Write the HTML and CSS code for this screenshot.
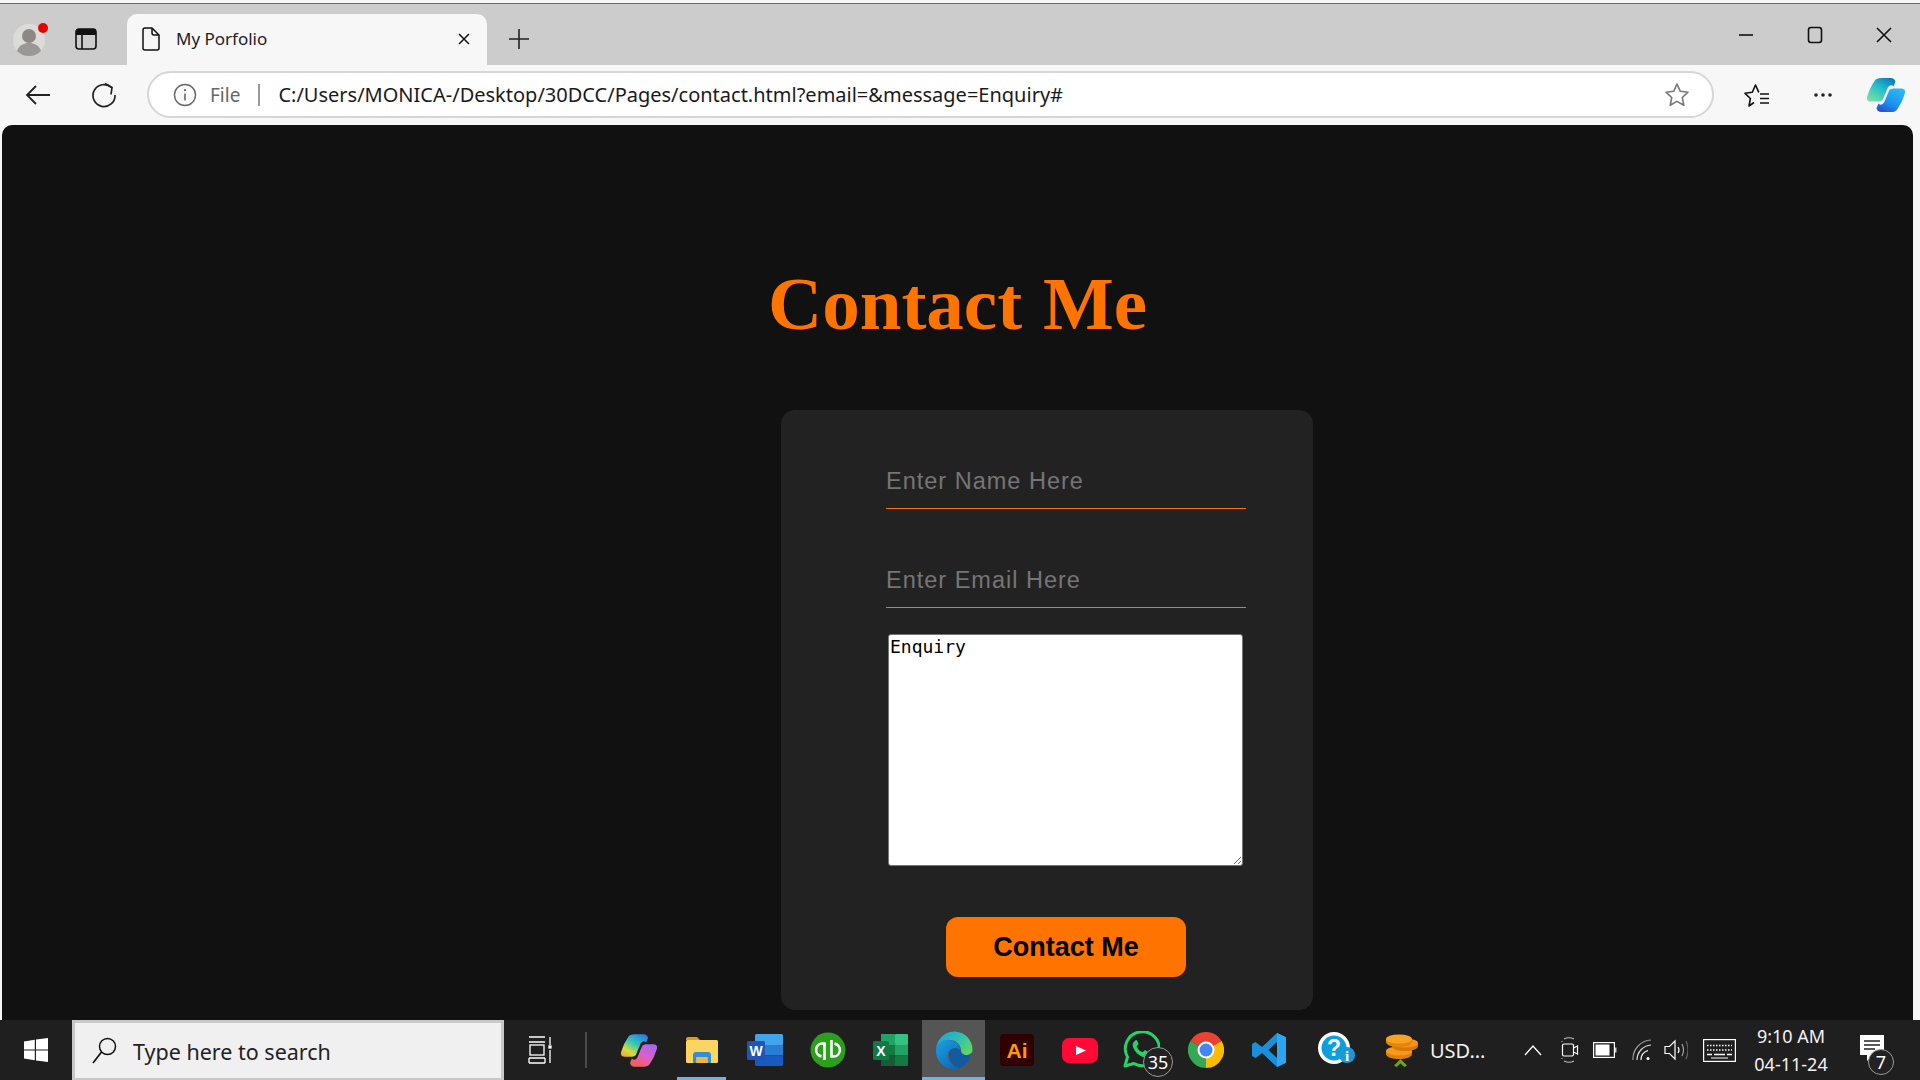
FILE: index.html
```html
<!DOCTYPE html>
<html lang="en">
<head>
  <meta charset="UTF-8">
  <title>My Porfolio</title>
  <link rel="stylesheet" href="styles.css">
</head>
<body>
  <div class="window">
    <!-- tab strip -->
    <div class="tab-strip">
      <div class="slot profile">
        <svg width="36" height="34" viewBox="0 0 36 34">
          <circle cx="16" cy="18" r="16" fill="#dcdbd8"/>
          <circle cx="16" cy="14" r="7" fill="#8c8985"/>
          <path d="M4 29c2-6 7-8 12-8s10 2 12 8c-3 3-7 5-12 5S7 32 4 29z" fill="#9a9794"/>
          <circle cx="30" cy="6" r="5" fill="#e60000"/>
        </svg>
      </div>
      <div class="slot sidebar-btn">
        <svg width="22" height="22" viewBox="0 0 22 22">
          <rect x="1" y="1" width="20" height="20" rx="3" fill="none" stroke="#111" stroke-width="1.6"/>
          <path d="M1 4a3 3 0 0 1 3-3h14a3 3 0 0 1 3 3v3H1z" fill="#111"/>
          <path d="M7 7v14" stroke="#111" stroke-width="1.6"/>
        </svg>
      </div>
      <div class="tab">
        <svg width="20" height="24" viewBox="0 0 20 24">
          <path d="M4 1h7l7 7v13a2 2 0 0 1-2 2H4a2 2 0 0 1-2-2V3a2 2 0 0 1 2-2z" fill="none" stroke="#111" stroke-width="1.5"/>
          <path d="M11 1v5a2 2 0 0 0 2 2h5" fill="none" stroke="#111" stroke-width="1.5"/>
        </svg>
        <span class="tab-title">My Porfolio</span>
        <svg class="tab-close" width="12" height="12" viewBox="0 0 12 12">
          <path d="M1 1l10 10M11 1L1 11" stroke="#111" stroke-width="1.5"/>
        </svg>
      </div>
      <div class="slot new-tab">
        <svg width="20" height="20" viewBox="0 0 20 20">
          <path d="M10 0v20M0 10h20" stroke="#222" stroke-width="1.6"/>
        </svg>
      </div>
      <div class="win-controls">
        <div class="slot win-btn">
          <svg width="16" height="16" viewBox="0 0 16 16"><path d="M1 8h14" stroke="#111" stroke-width="1.6"/></svg>
        </div>
        <div class="slot win-btn">
          <svg width="16" height="18" viewBox="0 0 16 18"><rect x="1.5" y="1.5" width="13" height="15" rx="2.5" fill="none" stroke="#111" stroke-width="1.6"/></svg>
        </div>
        <div class="slot win-btn">
          <svg width="16" height="16" viewBox="0 0 16 16"><path d="M1 1l14 14M15 1L1 15" stroke="#111" stroke-width="1.6"/></svg>
        </div>
      </div>
    </div>

    <!-- address bar -->
    <div class="toolbar">
      <div class="slot back-btn">
        <svg width="26" height="22" viewBox="0 0 26 22"><path d="M25 11H2M11 2l-9 9 9 9" fill="none" stroke="#222" stroke-width="1.8"/></svg>
      </div>
      <div class="slot reload-btn">
        <svg width="26" height="26" viewBox="0 0 26 26"><path d="M20.5 5.5A11 11 0 1 0 24 13" fill="none" stroke="#222" stroke-width="1.7"/><path d="M14 1.5l7 4-1 7" fill="none" stroke="#222" stroke-width="1.7"/></svg>
      </div>
      <div class="address">
        <svg class="info-icon" width="24" height="24" viewBox="0 0 24 24">
          <circle cx="12" cy="12" r="10.5" fill="none" stroke="#666" stroke-width="1.4"/>
          <path d="M12 10.5v7" stroke="#666" stroke-width="1.6"/><circle cx="12" cy="7.2" r="1.1" fill="#666"/>
        </svg>
        <span class="scheme">File</span>
        <span class="scheme-sep"></span>
        <span class="url">C:/Users/MONICA-/Desktop/30DCC/Pages/contact.html?email=&amp;message=Enquiry#</span>
        <svg class="star" width="26" height="26" viewBox="0 0 26 26">
          <path d="M13 2l3.3 7.3 7.7.9-5.7 5.3 1.5 7.8-6.8-3.9-6.8 3.9 1.5-7.8L2 10.2l7.7-.9z" fill="none" stroke="#777" stroke-width="1.6" stroke-linejoin="round"/>
        </svg>
      </div>
      <div class="slot">
        <svg width="28" height="28" viewBox="0 0 28 28">
          <path d="M11 21.5L6 25l1.4-7.5L2 12.3l7.3-1L12.5 4l3.3 7.3" fill="none" stroke="#111" stroke-width="1.6" stroke-linejoin="round"/>
          <path d="M17 13h9M17 17.5h9M17 22h9" stroke="#111" stroke-width="1.5"/>
        </svg>
      </div>
      <div class="slot more-btn">
        <svg width="20" height="6" viewBox="0 0 20 6"><circle cx="3" cy="3" r="1.8" fill="#222"/><circle cx="10" cy="3" r="1.8" fill="#222"/><circle cx="17" cy="3" r="1.8" fill="#222"/></svg>
      </div>
      <div class="slot">
        <svg width="38" height="34" viewBox="0 0 40 36">
          <defs>
            <linearGradient id="cpA" x1="0.8" y1="0" x2="0.1" y2="1"><stop offset="0" stop-color="#0e7db5"/><stop offset="0.45" stop-color="#27c0cb"/><stop offset="1" stop-color="#7fe39c"/></linearGradient>
            <linearGradient id="cpB" x1="0.2" y1="1" x2="0.8" y2="0"><stop offset="0" stop-color="#2cb9f8"/><stop offset="0.6" stop-color="#1c92ee"/><stop offset="1" stop-color="#2450d6"/></linearGradient>
          </defs>
          <path d="M8 3Q10 0 15 0H25Q29 0 30 4L28 9Q25 6 22 10L17 22Q16 25 12 25H4Q-1 25 0 20Q3 10 8 3Z" fill="url(#cpA)"/>
          <path d="M8 3Q10 0 15 0H25Q29 0 30 4L28 9Q25 6 22 10L17 22Q16 25 12 25H4Q-1 25 0 20Q3 10 8 3Z" fill="url(#cpB)" transform="rotate(180 20 18)"/>
        </svg>
      </div>
    </div>

    <!-- the page itself -->
    <div class="viewport-wrap">
      <main class="viewport">
        <h1 class="page-title">Contact Me</h1>
        <form class="contact-card" action="#">
          <input class="field" type="text" placeholder="Enter Name Here">
          <input class="field field-email" type="email" placeholder="Enter Email Here">
          <textarea class="message">Enquiry</textarea>
          <button class="submit-btn" type="submit">Contact Me</button>
        </form>
      </main>
    </div>

    <!-- windows taskbar -->
    <footer class="taskbar">
      <div class="slot start-btn">
        <svg width="24" height="24" viewBox="0 0 24 24"><path d="M0 3.5l10.8-1.7v9.6H0zM12 1.6L24 0v11.4H12zM0 12.6h10.8v9.6L0 20.5zM12 12.6h12V24l-12-1.6z" fill="#fff"/></svg>
      </div>
      <div class="search-box">
        <svg width="26" height="30" viewBox="0 0 26 30"><circle cx="15.5" cy="10.5" r="8" fill="none" stroke="#111" stroke-width="1.5"/><path d="M9.5 16L1 27" stroke="#111" stroke-width="1.7"/></svg>
        <span class="search-text">Type here to search</span>
      </div>
      <div class="slot task-view">
        <svg width="24" height="28" viewBox="0 0 24 28" fill="none" stroke="#fff" stroke-width="1.3">
          <path d="M1 1h16M1 6h16M1 22h16M1 27h16"/><rect x="2" y="9" width="14" height="10"/><path d="M1 22v5M17 22v5"/><path d="M22 1v8M22 14v13"/><rect x="21" y="10" width="2" height="2" fill="#fff"/>
        </svg>
      </div>
      <span class="bar-divider"></span>
      <div class="apps">
        <div class="slot app">
          <svg width="36" height="33" viewBox="0 0 40 36">
            <defs>
              <linearGradient id="cpC" x1="0.8" y1="0" x2="0.1" y2="1"><stop offset="0" stop-color="#2b7ee6"/><stop offset="0.4" stop-color="#30c4bd"/><stop offset="0.75" stop-color="#d6dc3c"/><stop offset="1" stop-color="#f4a52e"/></linearGradient>
              <linearGradient id="cpD" x1="0.2" y1="1" x2="0.8" y2="0"><stop offset="0" stop-color="#a569ee"/><stop offset="0.5" stop-color="#dd5fc8"/><stop offset="1" stop-color="#f4604c"/></linearGradient>
            </defs>
            <path d="M8 3Q10 0 15 0H25Q29 0 30 4L28 9Q25 6 22 10L17 22Q16 25 12 25H4Q-1 25 0 20Q3 10 8 3Z" fill="url(#cpC)"/>
            <path d="M8 3Q10 0 15 0H25Q29 0 30 4L28 9Q25 6 22 10L17 22Q16 25 12 25H4Q-1 25 0 20Q3 10 8 3Z" fill="url(#cpD)" transform="rotate(180 20 18)"/>
          </svg>
        </div>
        <div class="slot app app-open">
          <svg width="32" height="28" viewBox="0 0 32 28">
            <path d="M0 3a2 2 0 0 1 2-2h9l3 3h-14z" fill="#d99f14"/>
            <rect y="4" width="32" height="23" rx="1.5" fill="#fbd560"/>
            <path d="M7 27v-8a3 3 0 0 1 3-3h12a3 3 0 0 1 3 3v8h-3.5v-6h-11v6z" fill="#2f8fd8"/>
            <rect x="10.5" y="21" width="11" height="6" fill="#f4b73a"/>
          </svg>
        </div>
        <div class="slot app">
          <svg width="36" height="32" viewBox="0 0 36 32">
            <rect x="8" width="28" height="11" rx="1.5" fill="#41a5ee"/>
            <rect x="8" y="11" width="28" height="10.5" fill="#2b7cd3"/>
            <rect x="8" y="21.5" width="28" height="10.5" rx="1.5" fill="#185abd"/>
            <rect y="7" width="18" height="19" rx="1.5" fill="#1f55b5"/>
            <text class="app-letter" x="9" y="21.5" text-anchor="middle" font-size="14">W</text>
          </svg>
        </div>
        <div class="slot app">
          <svg width="36" height="36" viewBox="0 0 36 36">
            <circle cx="18" cy="18" r="17.5" fill="#2ca01c"/>
            <path d="M14.5 28V11.5h-2a6.5 6.5 0 0 0-1 12.9" fill="none" stroke="#fff" stroke-width="2.6"/>
            <path d="M21.5 8v16.5h2a6.5 6.5 0 0 0 1-12.9" fill="none" stroke="#fff" stroke-width="2.6"/>
          </svg>
        </div>
        <div class="slot app">
          <svg width="35" height="32" viewBox="0 0 35 32">
            <rect x="8" width="14" height="11" fill="#21a366"/>
            <rect x="22" width="13" height="11" rx="1" fill="#33c481"/>
            <rect x="8" y="11" width="14" height="10.5" fill="#107c41"/>
            <rect x="22" y="11" width="13" height="10.5" fill="#21a366"/>
            <rect x="8" y="21.5" width="14" height="10.5" fill="#185c37"/>
            <rect x="22" y="21.5" width="13" height="10.5" rx="1" fill="#107c41"/>
            <rect y="7" width="16" height="19" rx="1.5" fill="#0f7a43"/>
            <text class="app-letter" x="8" y="21.5" text-anchor="middle" font-size="14">X</text>
          </svg>
        </div>
        <div class="slot app app-active">
          <svg width="38" height="38" viewBox="0 0 38 38">
            <defs>
              <linearGradient id="edgeA" x1="0" y1="0" x2="1" y2="0.6"><stop offset="0" stop-color="#1a9fd8"/><stop offset="0.6" stop-color="#2fc0b0"/><stop offset="1" stop-color="#5bd66a"/></linearGradient>
              <linearGradient id="edgeB" x1="0" y1="0" x2="0.8" y2="1"><stop offset="0" stop-color="#1d9fe2"/><stop offset="1" stop-color="#0c69b8"/></linearGradient>
            </defs>
            <path d="M1 20C1 9 9 .5 19 .5C30 .5 37.5 9 37.5 19C37.5 22.5 34 24 31 24C28 24 26 22 26 19C26 14 21 9 15 9C8 9 1 13 1 20Z" fill="url(#edgeA)"/>
            <path d="M1 20C1 12 8 8 15 9C21 10 26 14 25 19C21 15 14 17 13 23C12 30 18 36 25 37C23 37.6 21 38 19 38C9 38 1 30 1 20Z" fill="url(#edgeB)"/>
            <path d="M14 23C14 18 21 15 25.5 19C25 21 27 23 30 24C32 25 34 24.5 36 24C34 31 30 35 25 37C18 36 14 30 14 23Z" fill="#145a9e"/>
          </svg>
        </div>
        <div class="slot app">
          <svg width="34" height="32" viewBox="0 0 34 32">
            <rect width="34" height="32" rx="4" fill="#300000"/>
            <text class="ai-text" x="17" y="23.5" text-anchor="middle" font-size="21">Ai</text>
          </svg>
        </div>
        <div class="slot app">
          <svg width="36" height="25" viewBox="0 0 36 25">
            <rect width="36" height="25" rx="7" fill="#ff0a37"/>
            <path d="M14 8l10 4.5-10 4.5z" fill="#fff"/>
          </svg>
        </div>
        <div class="slot app app-chat">
          <svg width="38" height="38" viewBox="0 0 38 38">
            <path d="M3 35l2.5-9A17 17 0 1 1 12 32.500z" fill="none" stroke="#25d366" stroke-width="3" stroke-linejoin="round"/>
            <path d="M13 10c-2 1-3 3-2 6 2 5 5 8 10 10 3 1 5 0 6-2 .5-1 .5-2 0-2.5l-3.500-2c-.8-.4-1.300 0-2 1-.5.7-1 .8-2 .3-2-1-3.500-2.500-4.500-4.500-.4-1-.2-1.400.5-2 .8-.7 1.200-1.200.8-2l-1.500-3c-.3-.5-1-.6-1.800.2z" fill="#25d366"/>
          </svg>
          <span class="badge badge-wa">35</span>
        </div>
        <div class="slot app">
          <svg width="36" height="36" viewBox="0 0 36 36">
            <path d="M18 18L2.4 9A18 18 0 0 1 33.6 9z" fill="#ea4335"/>
            <path d="M18 18L33.6 9A18 18 0 0 1 18 36z" fill="#fbbc04"/>
            <path d="M18 18L18 36A18 18 0 0 1 2.4 9z" fill="#34a853"/>
            <circle cx="18" cy="18" r="8.5" fill="#fff"/>
            <circle cx="18" cy="18" r="6.5" fill="#4285f4"/>
          </svg>
        </div>
        <div class="slot app">
          <svg width="36" height="36" viewBox="0 0 36 36">
            <path d="M26 1l9 4.3v25.4L26 35 11 21l-6.500 5L1 24V12l3.500-2L11 15zM26 10l-8.500 8 8.500 8z" fill="#1a8fdc"/>
            <path d="M26 1l9 4.3v25.4L26 35z" fill="#2aa7f0"/>
          </svg>
        </div>
      </div>
      <div class="slot help-app">
        <svg width="38" height="36" viewBox="0 0 38 36">
          <circle cx="16" cy="16" r="16" fill="#fff"/>
          <circle cx="16" cy="16" r="12.5" fill="#0c9fe0"/>
          <text class="help-mark" x="16" y="24" text-anchor="middle" font-size="23">?</text>
          <circle cx="29" cy="23" r="8" fill="#1c9ad6"/>
          <text class="help-info" x="29" y="28.5" text-anchor="middle" font-size="15">i</text>
        </svg>
      </div>
      <div class="slot coin-app">
        <svg width="34" height="33" viewBox="0 0 34 33">
          <path d="M1 17v3c0 3 6 5 13 5s13-2 13-5v-3z" fill="#e07f08"/>
          <ellipse cx="14" cy="17" rx="13" ry="4.5" fill="#f59a1c"/>
          <path d="M7 9v3c0 3 6 5 13 5s13-2 13-5V9z" fill="#d97806"/>
          <ellipse cx="20" cy="9" rx="13" ry="4.5" fill="#f39418"/>
          <path d="M1 5v3c0 3 6 5 13 5s13-2 13-5V5z" fill="#e58608"/>
          <ellipse cx="14" cy="5" rx="13" ry="4.5" fill="#f8a224"/>
          <path d="M9 31.5l6.500-6.500 6.500 6.500-2.500 1.500-4-3.500-4 3.500z" fill="#6aa80c"/>
        </svg>
      </div>
      <span class="coin-label">USD...</span>
      <div class="tray">
        <div class="slot">
          <svg width="18" height="11" viewBox="0 0 18 11"><path d="M1 10l8-9 8 9" fill="none" stroke="#fff" stroke-width="1.3"/></svg>
        </div>
        <div class="slot">
          <svg width="18" height="28" viewBox="0 0 18 28" fill="none" stroke="#fff" stroke-width="1.2">
            <rect x="1.5" y="8" width="11" height="12" rx="1.5"/><path d="M12.5 12l4-2v8l-4-2"/><path d="M3 3q5-2.5 10 0M3 25q5 2.5 10 0" stroke="#bbb"/><path d="M1 6v-1M1 23v-1" stroke="#bbb"/>
          </svg>
        </div>
        <div class="slot">
          <svg width="24" height="16" viewBox="0 0 24 16"><rect x=".6" y=".6" width="20.8" height="14.8" fill="none" stroke="#fff" stroke-width="1.2"/><rect x="2.5" y="2.5" width="14" height="11" fill="#fff"/><rect x="22" y="5.5" width="1.5" height="5" fill="#ccc"/></svg>
        </div>
        <div class="slot">
          <svg width="20" height="22" viewBox="0 0 20 22" fill="none" stroke-width="1.2">
            <path d="M1 21A19 19 0 0 1 19 1" stroke="#999"/><path d="M5 21A15 15 0 0 1 19 6" stroke="#ddd"/><path d="M9 21a10 10 0 0 1 7-9.5" stroke="#fff"/><circle cx="16" cy="19.5" r="1.5" fill="#fff"/>
          </svg>
        </div>
        <div class="slot">
          <svg width="24" height="22" viewBox="0 0 24 22" fill="none">
            <path d="M1 7.5h4.5L11 2v18l-5.5-5.5H1z" stroke="#fff" stroke-width="1.2"/><path d="M14 8q2 3 0 6" stroke="#fff" stroke-width="1.2"/><path d="M18 5q3 6 0 12" stroke="#aaa" stroke-width="1.1"/><path d="M22 2q4 9 0 18" stroke="#666" stroke-width="1.1"/>
          </svg>
        </div>
        <div class="slot">
          <svg width="33" height="23" viewBox="0 0 33 23" fill="none" stroke="#fff">
            <rect x=".6" y=".6" width="31.8" height="21.8" stroke-width="1.2"/>
            <path d="M4 6.5h25M4 11h25" stroke-width="1.3" stroke-dasharray="1.5 1.5"/>
            <path d="M4 15.5h5M11 15.5h11M24 15.5h5" stroke-width="1.3"/><path d="M8 19h17" stroke-width="1"/>
          </svg>
        </div>
        <div class="clock">
          <span>9:10 AM</span>
          <span>04-11-24</span>
        </div>
        <div class="slot notif">
          <svg width="26" height="28" viewBox="0 0 26 28"><path d="M1 1h24v20H14l-6 6v-6H1z" fill="#fff"/><path d="M5 7h16M5 11h16M5 15h11" stroke="#222" stroke-width="1.3"/></svg>
          <span class="badge badge-notif">7</span>
        </div>
      </div>
    </footer>
  </div>
</body>
</html>
```

FILE: styles.css
```css
* {
  box-sizing: border-box;
}

body {
  margin: 0;
  font-family: "Noto Sans", "Open Sans", sans-serif;
  background-color: #f7f7f7;
}

.window {
  display: flex;
  flex-direction: column;
  width: 1920px;
  height: 1080px;
  overflow: hidden;
}

.slot {
  display: flex;
  align-items: center;
  justify-content: center;
  flex-shrink: 0;
  position: relative;
  height: 100%;
}

/* tab strip */
.tab-strip {
  display: flex;
  flex-shrink: 0;
  height: 62px;
  margin-top: 3px;
  padding-right: 2px;
  background-color: #cccccc;
  border-top: 1px solid #6a6a6a;
}

.profile {
  width: 58px;
  padding: 9px 0 0 3px;
}

.sidebar-btn {
  width: 56px;
  margin-right: 13px;
  padding-top: 9px;
}

.tab {
  display: flex;
  align-items: center;
  width: 360px;
  margin-top: 10px;
  padding: 0 17px 2px 14px;
  background-color: #f7f7f7;
  border-radius: 10px 10px 0 0;
  color: #222;
}

.tab-title {
  margin-left: 15px;
  font-size: 17px;
}

.tab-close {
  margin-left: auto;
}

.new-tab {
  width: 64px;
  padding-top: 9px;
}

.win-controls {
  display: flex;
  margin-left: auto;
  height: 100%;
}

.win-btn {
  width: 69px;
}

/* toolbar */
.toolbar {
  display: flex;
  align-items: center;
  flex-shrink: 0;
  height: 60px;
  padding: 0 6px 1px 0;
}

.toolbar .slot {
  width: 56px;
}

.toolbar .back-btn {
  width: 76px;
}

.address {
  display: flex;
  align-items: center;
  flex: 1;
  height: 47px;
  margin: 0 15px;
  padding: 0 22px 0 24px;
  background-color: #fff;
  border: 2px solid #d6d6d6;
  border-radius: 24px;
}

.scheme {
  margin-left: 13px;
  font-size: 19px;
  color: #666;
}

.scheme-sep {
  width: 2px;
  height: 22px;
  margin: 0 18px;
  background-color: #999;
}

.url {
  font-size: 20px;
  color: #1a1a1a;
}

.star {
  margin-left: auto;
}

.toolbar .more-btn {
  margin: 0 7px 0 10px;
}

/* page */
.viewport-wrap {
  flex: 1;
  min-height: 0;
  padding: 0 7px 0 2px;
}

.viewport {
  height: 100%;
  background-color: #111111;
  border-radius: 10px 10px 0 0;
  overflow: hidden;
}

.page-title {
  margin: 136px 0 63px;
  font-family: "Liberation Serif", serif;
  font-size: 75px;
  line-height: 86px;
  font-weight: bold;
  word-spacing: 2px;
  text-align: center;
  color: #ff7300;
}

.contact-card {
  display: flex;
  flex-direction: column;
  align-items: flex-start;
  width: 532px;
  height: 600px;
  margin-left: 779px;
  padding: 58px 0 0 105px;
  background-color: #232222;
  border-radius: 14px;
}

.field {
  width: 360px;
  height: 41px;
  padding: 0 0 14px;
  background: transparent;
  border: none;
  border-bottom: 1px solid #ff7300;
  outline: none;
  font-family: "Liberation Sans", sans-serif;
  font-size: 23.5px;
  letter-spacing: 1px;
  color: #fff;
}

.field::placeholder {
  color: #757575;
}

.field-email {
  margin-top: 58px;
}

.message {
  display: block;
  width: 355px;
  height: 232px;
  margin: 26px 0 0 2px;
  padding: 1px;
  background-color: #fff;
  border: 1px solid #767676;
  border-radius: 3px;
  font-family: "DejaVu Sans Mono", monospace;
  font-size: 18px;
  color: #000;
}

.submit-btn {
  width: 240px;
  height: 60px;
  margin: 51px 0 0 60px;
  background-color: #ff7300;
  border: none;
  border-radius: 12px;
  font-family: "Liberation Sans", sans-serif;
  font-size: 27px;
  font-weight: bold;
  color: #000;
  cursor: pointer;
}

/* taskbar */
.taskbar {
  display: flex;
  align-items: center;
  flex-shrink: 0;
  height: 60px;
  background-color: #1f1f1f;
  color: #fff;
}

.start-btn {
  width: 72px;
}

.search-box {
  display: flex;
  align-items: center;
  width: 432px;
  height: 100%;
  padding-left: 17px;
  background-color: #f0f0f0;
  border: 3px solid #c8c8c8;
  border-bottom-width: 2px;
}

.search-text {
  margin-left: 15px;
  padding-top: 2px;
  font-size: 21.5px;
  color: #222;
}

.task-view {
  width: 72px;
}

.bar-divider {
  width: 2px;
  height: 36px;
  margin: 0 20px 0 9px;
  background-color: #4a4a4a;
}

.apps {
  display: grid;
  grid-template-columns: repeat(11, 63px);
  height: 100%;
}

.app-open::after,
.app-active::after {
  content: "";
  position: absolute;
  bottom: 0;
  height: 3px;
  background-color: #6fb1e8;
}

.app-open::after {
  width: 49px;
}

.app-active {
  background-color: #555555;
}

.app-active::after {
  left: 0;
  right: 0;
}

.app-chat {
  padding-right: 4px;
}

.app-letter {
  font-family: "Liberation Sans", sans-serif;
  font-weight: bold;
  fill: #fff;
}

.ai-text {
  font-family: "Liberation Sans", sans-serif;
  font-weight: bold;
  fill: #ff9a00;
}

.help-mark {
  font-family: "Liberation Sans", sans-serif;
  font-weight: bold;
  fill: #fff;
}

.help-info {
  font-family: "Liberation Serif", serif;
  font-weight: bold;
  fill: #fff;
}

.badge {
  position: absolute;
  display: flex;
  align-items: center;
  justify-content: center;
  border-radius: 50%;
  background-color: #222;
  border: 1px solid #999;
  color: #fff;
}

.badge-wa {
  right: 1px;
  bottom: 3px;
  width: 30px;
  height: 30px;
  font-size: 18px;
}

.badge-notif {
  right: 17px;
  bottom: 5px;
  width: 26px;
  height: 26px;
  font-size: 18px;
}

.notif {
  padding-bottom: 4px;
}

.help-app {
  width: 63px;
  margin-left: 5px;
}

.coin-app {
  width: 62px;
  padding-left: 6px;
}

.coin-label {
  width: 85px;
  font-size: 20px;
  color: #f2f2f2;
}

.tray {
  display: grid;
  grid-template-columns: 36px 38px 32px 42px 26px 60px 84px 78px;
  height: 100%;
}

.clock {
  display: flex;
  flex-direction: column;
  align-items: center;
  justify-content: center;
  gap: 6px;
  font-size: 18px;
  line-height: 22px;
  color: #f2f2f2;
}
```
